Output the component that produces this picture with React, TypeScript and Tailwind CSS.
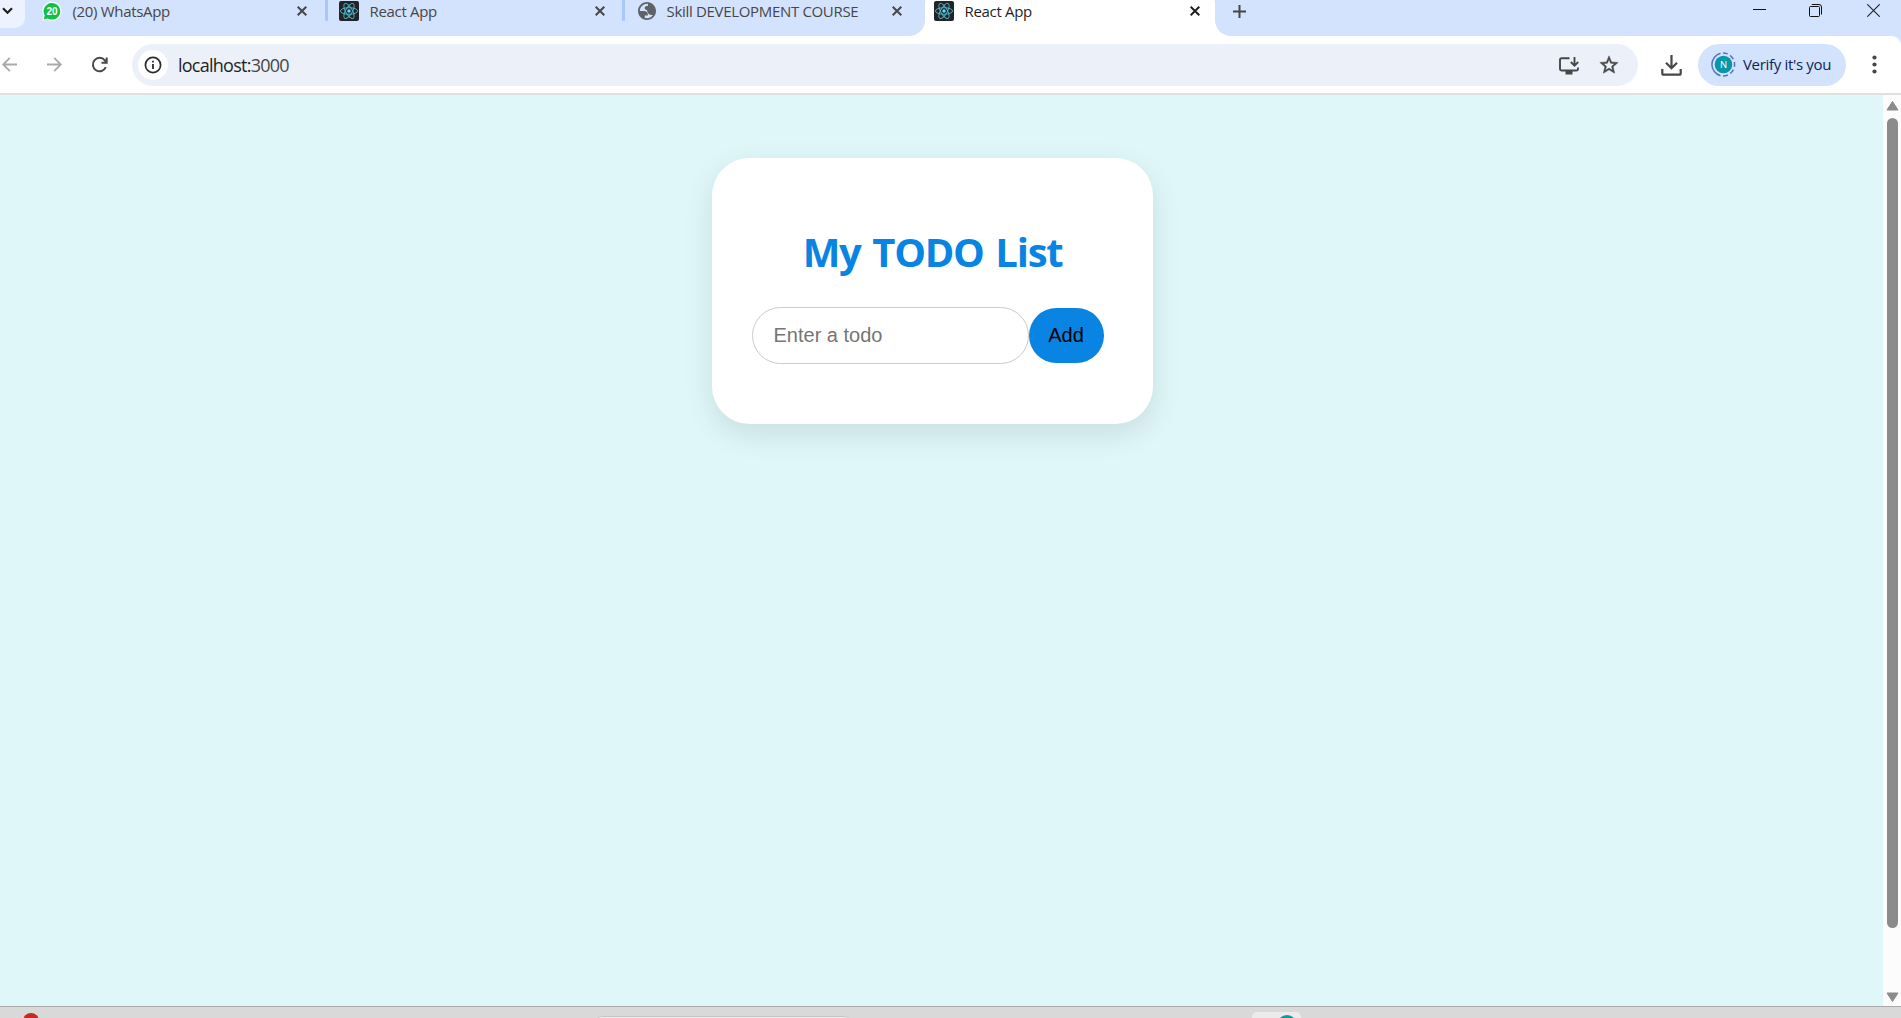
import React from "react";

function ReactMark() {
  return (
    <svg className="size-5 shrink-0" viewBox="0 0 20 20" fill="none">
      <rect width="20" height="20" rx="2" fill="#222425" />
      <g stroke="#4fb3cc" strokeWidth="0.95">
        <ellipse cx="10" cy="10" rx="8.6" ry="3.3" />
        <ellipse cx="10" cy="10" rx="8.6" ry="3.3" transform="rotate(60 10 10)" />
        <ellipse cx="10" cy="10" rx="8.6" ry="3.3" transform="rotate(120 10 10)" />
      </g>
      <circle cx="10" cy="10" r="1.7" fill="#61dafb" />
    </svg>
  );
}

function WhatsAppMark() {
  return (
    <svg className="size-5 shrink-0" viewBox="0 0 20 20">
      <path d="M0.3 19.8 1.4 14.6A9.6 9.6 0 1 1 5.2 18.6Z" fill="#f4fbff" />
      <path d="M1.8 18.5 2.7 14.4A8.3 8.3 0 1 1 5.6 17.4Z" fill="#0fc143" />
      <text x="10" y="13.6" textAnchor="middle" fontSize="10" fontWeight="700" fill="#fff" fontFamily="Liberation Sans, sans-serif">20</text>
    </svg>
  );
}

function GlobeMark() {
  return (
    <svg className="size-[18px] shrink-0" viewBox="2 2 20 20" fill="#5f6368">
      <path d="M12 2C6.48 2 2 6.48 2 12s4.48 10 10 10 10-4.48 10-10S17.52 2 12 2zM4 12h4.400c3.400.020 4.900 1.730 4.540 5.130H9.490v2.470c3.490 1.110 6.540.040 9.170-3.200C14.780 17 12.560 15.200 12 11c-.600.060-2.600-.300-2.600-2.200 0-2.200 1.800-2.400 3.600-2.400V4.060C8.700 3.540 4.200 6.800 4 12z" fillRule="evenodd" />
    </svg>
  );
}

function Cross({ color }: { color: string }) {
  return (
    <svg className="size-[10px] shrink-0" viewBox="0 0 10 10" stroke={color} strokeWidth="2" fill="none">
      <path d="M.7.7 9.300 9.300M9.300.7.7 9.300" />
    </svg>
  );
}

type TabProps = { icon: React.ReactNode; title: string; className: string; color?: string };

function Tab({ icon, title, className, color = "#474747" }: TabProps) {
  return (
    <div className={`flex h-[22px] shrink-0 items-center ${className}`}>
      {icon}
      <span className="-mt-px ml-[10.5px] flex-1 whitespace-nowrap text-[15px] leading-[22px] tracking-[-0.32px]" style={{ color }}>
        {title}
      </span>
      <Cross color={color} />
    </div>
  );
}

function TabStrip() {
  return (
    <div className="flex h-9 shrink-0 bg-white">
      <div className="flex w-[925px] shrink-0 items-start rounded-br-[16px] bg-[#d3e2fd]">
        <div className="flex h-7 w-[25px] shrink-0 items-start rounded-br-[10px] bg-[#ecf2fe] pl-[2px] pt-[7px]">
          <svg width="11" height="8" viewBox="0 0 11 8" fill="none" stroke="#1f1f1f" strokeWidth="2.200">
            <path d="M1 1.300 5.500 5.800 10 1.300" />
          </svg>
        </div>
        <Tab icon={<WhatsAppMark />} title="(20) WhatsApp" className="ml-[17px] w-[265px]" />
        <div className="ml-[18px] h-[21px] w-[3px] shrink-0 rounded-b bg-[#a8c7fa]" />
        <Tab icon={<ReactMark />} title="React App" className="ml-[11px] w-[265.5px]" />
        <div className="ml-[17.5px] h-[21px] w-[3px] shrink-0 rounded-b bg-[#a8c7fa]" />
        <Tab icon={<GlobeMark />} title="Skill DEVELOPMENT COURSE" className="ml-[13px] w-[264px]" />
      </div>
      <div className="w-[290px] shrink-0 overflow-hidden bg-[#d3e2fd]">
        <div className="-mt-2 h-11 rounded-t-[12px] bg-white pt-2">
          <div className="pl-[9px]">
            <Tab icon={<ReactMark />} title="React App" className="w-[265.5px]" color="#1f1f1f" />
          </div>
        </div>
      </div>
      <div className="flex flex-1 items-start justify-between rounded-bl-[16px] bg-[#d3e2fd] pl-[18px] pr-[21px]">
        <svg className="mt-[5px]" width="13" height="13" viewBox="0 0 13 13" stroke="#474747" strokeWidth="2">
          <path d="M6.500 0v13M0 6.500h13" />
        </svg>
        <div className="mt-[4px] flex gap-[43px]">
          <svg width="13" height="13" viewBox="0 0 13 13" stroke="#111"><path d="M0 5.500h13" /></svg>
          <svg width="13" height="13" viewBox="0 0 13 13" stroke="#111" fill="none">
            <rect x=".5" y="2.500" width="10" height="10" rx="1" />
            <path d="M2.800.5H10a2.500 2.500 0 0 1 2.500 2.500v7.500" />
          </svg>
          <svg className="ml-[2px]" width="13" height="13" viewBox="0 0 13 13" stroke="#222" strokeWidth="1.100"><path d="M.3.3l12.400 12.400M12.700.3.3 12.700" /></svg>
        </div>
      </div>
    </div>
  );
}

function Toolbar() {
  return (
    <div className="flex bg-[#d3e2fd]">
      <div className="flex h-[57px] flex-1 items-center rounded-tr-[9px] bg-white pr-6">
        <svg className="ml-[2px]" width="15" height="15" viewBox="0 0 15 15" fill="none" stroke="#a9a9a9" strokeWidth="1.800">
          <path d="M15 7.500H1.500M7.800.8 1.200 7.500l6.600 6.700" />
        </svg>
        <svg className="ml-[30px]" width="15" height="15" viewBox="0 0 15 15" fill="none" stroke="#a9a9a9" strokeWidth="1.800">
          <path d="M0 7.500h13.500M7.200.8l6.600 6.700-6.600 6.700" />
        </svg>
        <svg className="ml-[29px]" width="18" height="18" viewBox="0 0 18 18" fill="none" stroke="#474747" strokeWidth="2">
          <path d="M14.800 11.200A6.700 6.700 0 1 1 13.800 4.300L16 6.500M15.700 1.500v5.200h-5.200" />
        </svg>
        <div className="ml-[23px] mt-px flex h-[42px] w-[1506px] shrink-0 items-center rounded-full bg-[#ecf0f9] pl-[6px] pr-[18px]">
          <div className="flex size-[30px] items-center justify-center rounded-full bg-white">
            <svg width="18" height="18" viewBox="0 0 18 18" fill="none">
              <circle cx="9" cy="9" r="7.600" stroke="#2b2b2b" strokeWidth="1.700" />
              <path d="M9 8v5M9 4.800v1.800" stroke="#2b2b2b" strokeWidth="1.800" />
            </svg>
          </div>
          <span className="ml-[10px] flex-1 text-[18px] leading-6 tracking-[-0.75px] text-[#1f1f1f]">
            localhost:<span className="text-[#474747]">3000</span>
          </span>
          <svg className="mt-px" width="20" height="18" viewBox="0 0 20 18" fill="none" stroke="#474747" strokeWidth="1.900">
            <path d="M10.500 1.200H2.500Q1 1.200 1 2.700V12Q1 13.500 2.500 13.500h15Q19 13.500 19 12v-1.500" />
            <path d="M15.500 0v8M11.800 5l3.700 3.600L19.200 5" />
            <path d="M6.500 14v3.500h7V14z" fill="#474747" stroke="none" />
          </svg>
          <svg className="ml-[19px]" width="22" height="22" viewBox="0 0 24 24" fill="#474747">
            <path d="M22 9.240l-7.190-.620L12 2 9.190 8.630 2 9.240l5.460 4.730L5.820 21 12 17.270 18.180 21l-1.630-7.030L22 9.240zM12 15.400l-3.760 2.270 1-4.280-3.320-2.880 4.380-.380L12 6.100l1.710 4.040 4.380.380-3.320 2.880 1 4.280L12 15.400z" stroke="#474747" strokeWidth=".5" />
          </svg>
        </div>
        <svg className="ml-[23px] mt-px" width="21" height="21" viewBox="0 0 21 21" fill="none" stroke="#474747" strokeWidth="2.200">
          <path d="M10.500 0v13M5 7.800l5.500 5.500L16 7.800M1.300 14v4.200q0 1.500 1.500 1.500h15.400q1.500 0 1.500-1.500V14" />
        </svg>
        <div className="ml-[16px] flex h-[42px] w-[148px] shrink-0 items-center rounded-full bg-[#d3e2fd] pl-[13px]">
          <svg className="shrink-0" width="25" height="25" viewBox="0 0 25 25" fill="none">
            <circle cx="12.500" cy="12.500" r="8.800" fill="#0797a7" />
            <path d="M9.500 1.300A11.600 11.600 0 0 0 9.500 23.700" stroke="#5379b5" strokeWidth="1.500" />
            <path d="M12 24.100A11.600 11.600 0 0 0 12 .9" stroke="#5379b5" strokeWidth="1.500" strokeDasharray="5 2.850" />
            <text x="12.500" y="16" textAnchor="middle" fontSize="9.500" fill="#fff" fontFamily="Open Sans, sans-serif">N</text>
          </svg>
          <span className="-mt-px ml-[7px] whitespace-nowrap text-[15px] leading-5 tracking-[-0.32px] text-[#0b2558]">Verify it's you</span>
        </div>
        <svg className="ml-auto" width="5" height="19" viewBox="0 0 5 19" fill="#474747">
          <circle cx="2.500" cy="2.500" r="2.100" /><circle cx="2.500" cy="9.500" r="2.100" /><circle cx="2.500" cy="16.500" r="2.100" />
        </svg>
      </div>
    </div>
  );
}

function TodoCard() {
  return (
    <div className="h-[266px] w-[441px] rounded-[37.5px] bg-white px-10 pt-[66px] shadow-[0_10px_30px_rgba(0,0,0,0.1)]">
      <h1 className="whitespace-nowrap pl-px text-center text-[40px] font-bold leading-[56px] tracking-[-1.25px] [word-spacing:2.5px] text-[#0984e3]">My TODO List</h1>
      <div className="mt-[27px] flex items-center font-['Liberation_Sans',sans-serif] text-[20px]">
        <input
          placeholder="Enter a todo"
          className="h-[57px] w-[277px] shrink-0 rounded-full border border-[#cccccc] bg-white px-[21px] outline-none placeholder:text-[#757575]"
        />
        <button className="h-[55px] w-[75px] shrink-0 rounded-[27.5px] bg-[#0984e3] pb-[2px] text-black">Add</button>
      </div>
    </div>
  );
}

function Scrollbar() {
  return (
    <div className="flex w-[18px] shrink-0 flex-col items-center bg-[#fcfcfc] pb-[3px] pt-[5px]">
      <svg width="13" height="11" viewBox="0 0 13 11" fill="#8b8b8b"><path d="M6.500 1.500 12 10H1z" stroke="#8b8b8b" strokeLinejoin="round" /></svg>
      <div className="mt-[7px] h-[810px] w-[11px] rounded-full bg-[#8b8b8b]" />
      <svg className="mt-auto" width="13" height="11" viewBox="0 0 13 11" fill="#8b8b8b"><path d="M6.500 9.500 12 1H1z" stroke="#8b8b8b" strokeLinejoin="round" /></svg>
    </div>
  );
}

function Taskbar() {
  return (
    <div className="flex h-3 shrink-0 items-end overflow-hidden border-t border-[#a9a9a9] bg-[#d9d9d9]">
      <div className="-mb-[11px] ml-[23px] size-4 shrink-0 rounded-full bg-[#c42b1c]" />
      <div className="-mb-[18px] ml-[554px] h-5 w-[260px] shrink-0 rounded-[10px] border-t border-[#c6c6c6] bg-[#eeeeee]" />
      <div className="-mb-[24px] ml-[399px] flex h-[30px] w-[49px] shrink-0 rounded-[5px] bg-[#ebebeb] pl-[25px] pt-[3px]">
        <div className="size-5 rounded-full bg-[#1496a3]" />
      </div>
    </div>
  );
}

export default function App() {
  return (
    <div className="flex h-[1018px] w-[1901px] flex-col overflow-hidden bg-white font-['Open_Sans',sans-serif]">
      <TabStrip />
      <Toolbar />
      <div className="flex flex-1 border-t-2 border-[#dfe1e1]">
        <main className="flex flex-1 items-start justify-center bg-[#dff7f9] pr-[19px] pt-[63px]">
          <TodoCard />
        </main>
        <Scrollbar />
      </div>
      <Taskbar />
    </div>
  );
}
